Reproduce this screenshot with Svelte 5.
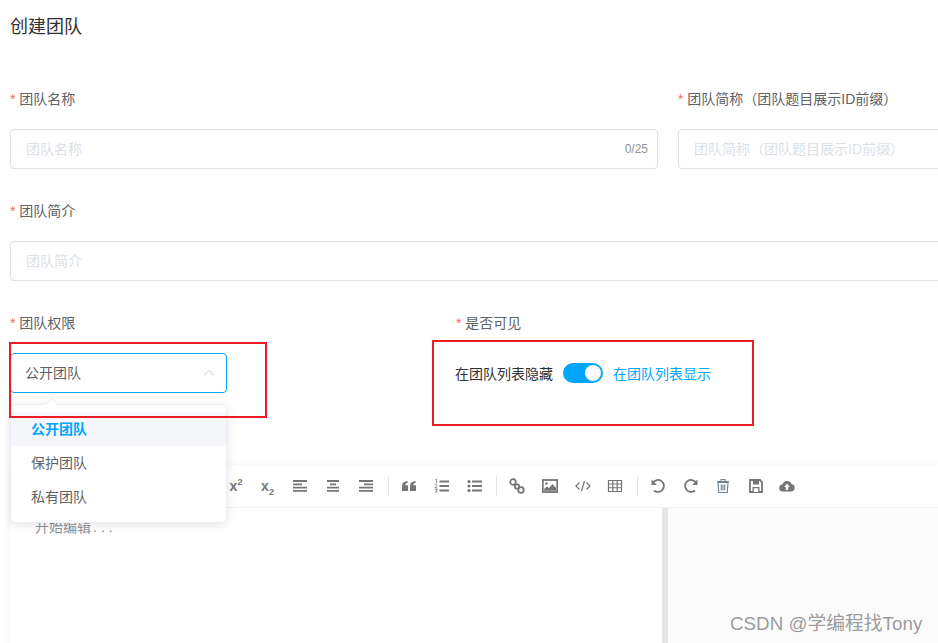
<script lang="ts">
	const options = ['公开团队', '保护团队', '私有团队'];
</script>

{#snippet req(text: string)}
	<div class="label"><span class="star">*</span> {text}</div>
{/snippet}

<div class="page">
	<h1 class="title">创建团队</h1>

	<div class="row two">
		<div class="field">
			{@render req('团队名称')}
			<div class="input">
				<span class="ph">团队名称</span>
				<span class="count">0/25</span>
			</div>
		</div>
		<div class="field">
			{@render req('团队简称（团队题目展示ID前缀）')}
			<div class="input"><span class="ph">团队简称（团队题目展示ID前缀）</span></div>
		</div>
	</div>

	<div class="field desc">
		{@render req('团队简介')}
		<div class="input"><span class="ph">团队简介</span></div>
	</div>

	<div class="row perms">
		<div class="field perm">
			{@render req('团队权限')}
			<div class="select">
				<span>公开团队</span>
				<svg class="caret" width="12" height="12" viewBox="0 0 12 12" fill="none" stroke="#c0c4cc" stroke-width="1"><path d="M1 8.5 6 3.5l5 5" /></svg>
			</div>
		</div>
		<div class="field">
			{@render req('是否可见')}
			<div class="switch-row">
				<span class="off">在团队列表隐藏</span>
				<span class="switch"><span class="knob"></span></span>
				<span class="on">在团队列表显示</span>
			</div>
		</div>
	</div>

	<div class="editor">
		<div class="toolbar">
			<span class="tool"><span class="script sup">x<sup>2</sup></span></span>
			<span class="tool"><span class="script">x<sub>2</sub></span></span>
			<span class="tool"><svg viewBox="0 0 16 16"><path class="s" d="M0 3h14M0 6.300h9M0 9.600h14M0 12.900h14" /></svg></span>
			<span class="tool"><svg viewBox="0 0 16 16"><path class="s" d="M1 3h12M4 6.300h6M1 9.600h12M1 12.900h12" /></svg></span>
			<span class="tool"><svg viewBox="0 0 16 16"><path class="s" d="M0 3h14M5 6.300h9M0 9.600h14M0 12.900h14" /></svg></span>
			<i class="sep"></i>
			<span class="tool"><svg viewBox="0 0 16 16"><path class="f" d="M1 8.500c0-3 1.500-5 5.500-5.500v2C5 5.300 4.300 6 4.300 7.300h2.700V13H1zM9 8.500c0-3 1.500-5 5.500-5.500v2C13 5.300 12.300 6 12.300 7.300H15V13H9z" /></svg></span>
			<span class="tool"><svg viewBox="0 0 16 16"><path class="s" d="M5.500 3.500H15M5.500 8H15M5.500 12.500H15" /><path class="t" d="M1.500 1.500 2.500 1v4M.8 6.800c1-1 2.500-.5 2 .8L1 9.800h2.500M1 11.300h2.300l-1 1.200c1.300 0 1.300 2-1.300 1.500" /></svg></span>
			<span class="tool"><svg viewBox="0 0 16 16"><path class="s" d="M5 3.500h10M5 8h10M5 12.500h10" /><circle class="f" cx="2" cy="3.500" r="1.600" /><circle class="f" cx="2" cy="8" r="1.600" /><circle class="f" cx="2" cy="12.500" r="1.600" /></svg></span>
			<i class="sep"></i>
			<span class="tool"><svg viewBox="0 0 16 16"><circle class="o" cx="4" cy="4" r="2.800" /><circle class="o" cx="8" cy="8.500" r="2.200" /><circle class="o" cx="12" cy="12" r="2.800" /></svg></span>
			<span class="tool"><svg viewBox="0 0 16 16"><rect class="o" x=".8" y="2" width="14.400" height="12" stroke-width="1.300" /><circle class="f" cx="4.500" cy="5.500" r="1.300" /><path class="f" d="M2 12.800V11l3-2.500 2 1.500 3.500-4 3.500 4v2.800z" /></svg></span>
			<span class="tool"><svg viewBox="0 0 16 16"><path class="o thin" d="M4.500 4.500 1 8l3.500 3.500M11.500 4.500 15 8l-3.500 3.500M9.500 3 6.500 13" /></svg></span>
			<span class="tool nudge"><svg viewBox="0 0 16 16"><path class="o thin" d="M1.500 2.500h13v11h-13zM1.500 6h13M1.500 9.750h13M5.800 2.500v11M10.200 2.500v11" /></svg></span>
			<i class="sep"></i>
			<span class="tool"><svg viewBox="0 0 16 16"><path class="o" d="M3 4.500A6 6 0 1 1 4 12.500" /><path class="f" d="M1.500 1.500v5.500H7z" /></svg></span>
			<span class="tool"><svg viewBox="0 0 16 16"><path class="o" d="M13 4.500A6 6 0 1 0 12 12.500" /><path class="f" d="M14.500 1.500v5.500H9z" /></svg></span>
			<span class="tool nudge"><svg viewBox="0 0 16 16"><path class="o trash" d="M3 4.500h10l-.7 10H3.700zM2 3.500h12M6 3V1.500h4V3M6.300 6.500v6M8 6.500v6M9.700 6.500v6" /></svg></span>
			<span class="tool nudge"><svg viewBox="0 0 16 16"><path class="o" d="M2 2h10l2 2v10H2z" /><path class="f" d="M5 2h6v4.500H5zM4.500 9h7v5h-7z" /><path class="white" d="M5.800 10.300h4.400v3.700H5.800z" /></svg></span>
			<span class="tool nudge-more"><svg viewBox="0 0 16 16"><path class="f" d="M4 13.500a3.500 3.500 0 0 1-.5-7A4.700 4.700 0 0 1 12.500 6a3.800 3.800 0 0 1 0 7.500z" /><path class="white" d="M8 5.500 11 9H9.200v3H6.800V9H5z" /></svg></span>
		</div>
		<div class="panes">
			<div class="edit">开始编辑<span class="dots">...</span></div>
			<div class="preview"></div>
		</div>
	</div>

	<div class="dropdown">
		<span class="arrow"></span>
		<ul>
			{#each options as opt, i}
				<li class:active={i === 0}>{opt}</li>
			{/each}
		</ul>
	</div>

	<div class="mark mark-a"></div>
	<div class="mark mark-b"></div>
	<div class="watermark">CSDN @学编程找Tony</div>
</div>

<style>
	:global(body) {
		margin: 0;
		background: #fff;
	}

	.page {
		position: relative;
		width: 938px;
		height: 643px;
		overflow: hidden;
		box-sizing: border-box;
		padding: 14px 0 0 10px;
		font-family: 'Liberation Sans', 'Noto Sans CJK SC', sans-serif;
		font-size: 14px;
		color: #606266;
	}

	.title {
		margin: 0;
		font-size: 18px;
		font-weight: 400;
		line-height: 26px;
		color: #303133;
	}

	.row {
		display: flex;
	}

	.two {
		gap: 20px;
		margin-top: 44px;
	}

	.two .field {
		flex: 0 0 648px;
	}

	.label {
		height: 45px;
		line-height: 30px;
		white-space: nowrap;
	}

	.star {
		color: #f56c6c;
	}

	.input {
		display: flex;
		align-items: center;
		justify-content: space-between;
		box-sizing: border-box;
		height: 40px;
		padding: 0 9px 2px 15px;
		border: 1px solid #dcdfe6;
		border-radius: 4px;
		background: #fff;
	}

	.ph {
		color: #dcdfe6;
		white-space: nowrap;
	}

	.count {
		margin-top: 2px;
		font-size: 12px;
		color: #909399;
	}

	.desc {
		width: 960px;
		margin-top: 27px;
	}

	.perms {
		margin-top: 27px;
	}

	.perm {
		flex: 0 0 446px;
	}

	.select {
		display: flex;
		align-items: center;
		justify-content: space-between;
		box-sizing: border-box;
		width: 217px;
		height: 40px;
		padding: 0 11px 2px 14px;
		border: 1px solid #00a6ff;
		border-radius: 4px;
	}

	.caret {
		margin-top: 2px;
	}

	.switch-row {
		display: flex;
		align-items: center;
		height: 40px;
		margin-left: -1px;
		font-size: 14px;
	}

	.off {
		color: #303133;
	}

	.on {
		color: #00a6ff;
	}

	.switch {
		position: relative;
		width: 40px;
		height: 20px;
		margin: 0 10px;
		border-radius: 10px;
		background: #00a6ff;
	}

	.knob {
		position: absolute;
		top: 2px;
		right: 2px;
		width: 16px;
		height: 16px;
		border-radius: 50%;
		background: #fff;
	}

	.editor {
		margin-top: 72px;
		height: 300px;
		background: #fff;
		box-shadow: 0 0 6px rgba(0, 0, 0, 0.06);
	}

	.toolbar {
		display: flex;
		align-items: center;
		box-sizing: border-box;
		height: 43px;
		padding-left: 208px;
		border-bottom: 1px solid #f1f1f6;
	}

	.tool {
		display: flex;
		flex: 0 0 33px;
		align-items: center;
		justify-content: center;
		color: #757575;
	}

	.tool svg {
		width: 16px;
		height: 16px;
	}

	.nudge svg {
		margin-left: -2px;
	}

	.nudge-more svg {
		margin-left: -5px;
	}

	.script {
		font-family: 'Liberation Sans', sans-serif;
		font-size: 14px;
		font-weight: 700;
		line-height: 14px;
	}

	.script.sup {
		margin-left: 3px;
	}

	.script sup,
	.script sub {
		font-size: 9px;
		line-height: 0;
	}

	.sep {
		flex: 0 0 1px;
		height: 20px;
		margin: 0 3px 0 5px;
		background: #e4e4e4;
	}

	.s {
		fill: none;
		stroke: #757575;
		stroke-width: 1.800;
	}

	.o {
		fill: none;
		stroke: #757575;
		stroke-width: 1.800;
	}

	.thin {
		stroke-width: 1.200;
	}

	.trash {
		stroke-width: 1.100;
		stroke: #6f8290;
	}

	.t {
		fill: none;
		stroke: #757575;
		stroke-width: 0.800;
	}

	.f {
		fill: #757575;
	}

	.white {
		fill: #fff;
	}

	.panes {
		display: flex;
		height: 256px;
	}

	.edit {
		flex: 0 0 658px;
		box-sizing: border-box;
		padding: 8px 25px;
		border-right: 6px solid #e5e5e5;
		color: #909399;
		font-size: 14px;
	}

	.dots {
		margin-left: 2px;
		letter-spacing: 4px;
	}

	.preview {
		flex: 1;
		background: #fbfbfb;
	}

	.dropdown {
		position: absolute;
		left: 11px;
		top: 405px;
		width: 215px;
		box-sizing: border-box;
		padding: 7px 0 8px;
		border-radius: 4px;
		background: #fff;
		box-shadow: 0 0 0 1px #ebeef5, 0 2px 12px rgba(0, 0, 0, 0.12);
	}

	.arrow {
		position: absolute;
		left: 36px;
		top: -4px;
		width: 9px;
		height: 9px;
		background: #fff;
		transform: rotate(45deg);
		box-shadow: -1px -1px 1px #ebeef5;
	}

	ul {
		position: relative;
		margin: 0;
		padding: 0;
		list-style: none;
	}

	li {
		height: 34px;
		padding: 0 20px;
		line-height: 34px;
		color: #606266;
	}

	li.active {
		background: #f5f7fa;
		color: #00a6ff;
		font-weight: 700;
	}

	.mark {
		position: absolute;
		box-sizing: border-box;
		border: 2px solid #ed1c24;
	}

	.mark-a {
		left: 9px;
		top: 342px;
		width: 258px;
		height: 76px;
	}

	.mark-b {
		left: 432px;
		top: 340px;
		width: 322px;
		height: 86px;
	}

	.watermark {
		position: absolute;
		left: 730px;
		top: 611px;
		font-size: 18.800px;
		line-height: 26px;
		color: rgba(90, 90, 90, 0.62);
		white-space: nowrap;
	}
</style>
